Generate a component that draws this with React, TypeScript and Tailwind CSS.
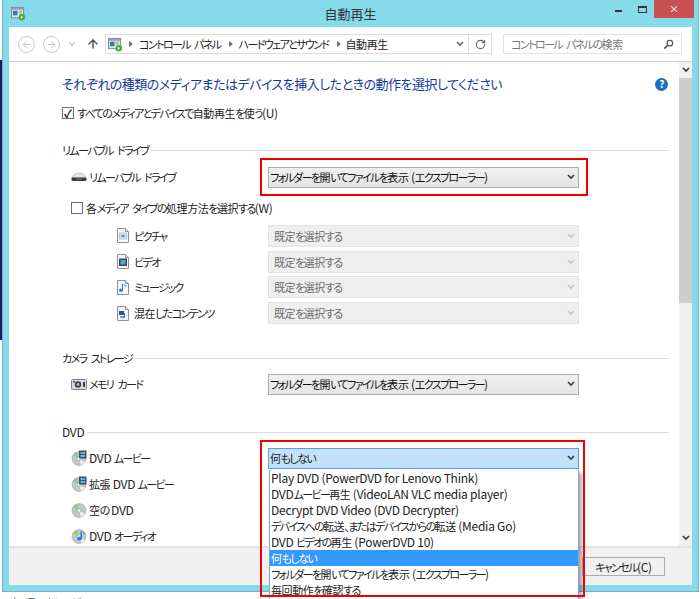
import { ArrowLeft, ArrowRight, ArrowUp, RotateCw, X } from "lucide-react";

const jp = "font-['Noto_Sans_CJK_JP',sans-serif] [font-feature-settings:'palt']";

// the reference font has very narrow kana, so each script gets its own size and tracking
function T({ s }: { s: string }) {
  const runs = s.split(/([\x20-\x7e]+|[\u3400-\u9fff]+)/).filter(Boolean);
  return (
    <>
      {runs.map((run, i) => {
        if (run === " ") {
          return <span key={i} className="whitespace-pre text-[12px] tracking-[1.5px]">{run}</span>;
        }
        if (/^[\x20-\x7e]/.test(run)) {
          return <span key={i} className="whitespace-pre text-[12px] tracking-[-0.25px]">{run}</span>;
        }
        if (/^[\u3400-\u9fff]/.test(run)) {
          return <span key={i} className="text-[11px] tracking-[-0.4px]">{run}</span>;
        }
        return <span key={i} className="text-[11px] tracking-[-1.6px]">{run}</span>;
      })}
    </>
  );
}

function AppIcon({ className }: { className?: string }) {
  return (
    <svg viewBox="0 0 16 16" width="15" height="15" className={className}>
      <rect x="0.5" y="1.5" width="13" height="11" fill="#e8eef2" stroke="#7a8288" />
      <rect x="1" y="2" width="12" height="2" fill="#8fa3b0" />
      <rect x="2" y="5" width="5" height="5" fill="#3d7a9a" />
      <rect x="8" y="5" width="4" height="1" fill="#8a9298" />
      <rect x="8" y="7" width="4" height="1" fill="#8a9298" />
      <circle cx="11.5" cy="12" r="3.5" fill="#3fae3a" />
      <path d="M10.5 10.5l2.5 1.5-2.5 1.5z" fill="#fff" />
    </svg>
  );
}

function Drive() {
  return (
    <svg viewBox="0 0 16 10" width="16" height="10">
      <path d="M1 6c1-3 3-5 7-5s6 2 7 5z" fill="#e4e4e4" stroke="#a8a8a8" strokeWidth="0.6" />
      <rect x="0.5" y="5.5" width="15" height="3.5" rx="1.2" fill="#3c3c3c" />
      <rect x="5" y="6.5" width="6" height="1" fill="#777" />
    </svg>
  );
}

function Doc({ kind }: { kind: "picture" | "video" | "music" | "mixed" }) {
  return (
    <svg viewBox="0 0 12 15" width="12" height="15">
      <path d="M0.5 0.5h8l3 3v11h-11z" fill="#f4f6f8" stroke="#8d9297" />
      <path d="M8.5 0.5v3h3" fill="#dfe3e6" stroke="#8d9297" />
      {kind === "picture" && (
        <>
          <rect x="2.5" y="5" width="7" height="6" fill="#cfe0ec" stroke="#9fb6c6" strokeWidth="0.6" />
          <rect x="4.5" y="7" width="3" height="2" fill="#4d8cc0" />
        </>
      )}
      {kind === "video" && (
        <>
          <rect x="2" y="4.5" width="8" height="7.5" fill="#2f4a66" />
          <rect x="3.5" y="6" width="5" height="4.5" fill="#5fa0cc" />
        </>
      )}
      {kind === "music" && <path d="M6 4v6.2a2 1.6 0 1 1-1-1.3V4h1l3 1.5v1.5z" fill="#2f80cf" />}
      {kind === "mixed" && (
        <>
          <rect x="2" y="5" width="5" height="4" fill="#31597e" />
          <path d="M8 7v4a1.5 1.2 0 1 1-1-1V7z" fill="#2f80cf" />
          <rect x="3" y="10" width="3" height="2" fill="#6aa6d0" />
        </>
      )}
    </svg>
  );
}

function Camera() {
  return (
    <svg viewBox="0 0 16 12" width="16" height="12">
      <rect x="0.5" y="1.5" width="15" height="10" rx="1" fill="#d4dae0" stroke="#7d858c" />
      <circle cx="7" cy="6.5" r="3.2" fill="#3a4048" />
      <circle cx="7" cy="6.5" r="1.4" fill="#a8bccb" />
      <rect x="12" y="4" width="2" height="5" fill="#3a4048" />
      <rect x="2" y="3" width="2" height="1.5" fill="#3a4048" />
    </svg>
  );
}

function Disc({ badge }: { badge?: "film" | "note" }) {
  return (
    <svg viewBox="0 0 16 16" width="16" height="16">
      <circle cx="8" cy="8.5" r="7" fill="#c2c6c8" stroke="#9da1a4" strokeWidth="0.6" />
      <path d="M8 8.5L2 5a7 7 0 0 1 4-3z" fill="#7fcf5f" opacity="0.7" />
      <path d="M8 8.5l6 3.5a7 7 0 0 1-4 3z" fill="#e9eced" />
      <circle cx="8" cy="8.5" r="1.8" fill="#fff" stroke="#8c9094" strokeWidth="0.6" />
      {badge === "film" && (
        <>
          <rect x="8" y="0.5" width="7.5" height="8" fill="#38536f" />
          <rect x="9.5" y="2" width="4.5" height="2" fill="#72aed6" />
          <rect x="9.5" y="5" width="4.5" height="2" fill="#72aed6" />
        </>
      )}
      {badge === "note" && <path d="M11 3v7.5a2.4 2 0 1 1-1.4-1.8V3l4 2v2z" fill="#2f80cf" />}
    </svg>
  );
}

function Chevron({ color = "#3a3a3a" }: { color?: string }) {
  return (
    <svg viewBox="0 0 8 6" width="8" height="6">
      <path d="M1 1l3 3 3-3" fill="none" stroke={color} strokeWidth="1.6" />
    </svg>
  );
}

function Crumb() {
  return (
    <svg viewBox="0 0 4 6" width="4" height="6" className="shrink-0">
      <path d="M0 0l4 3-4 3z" fill="#707070" />
    </svg>
  );
}

function Select({ label, disabled, open }: { label: string; disabled?: boolean; open?: boolean }) {
  const skin = open
    ? "h-[21px] border border-[#569de5] bg-[#c5e1f9] pl-[1px] text-[#222]"
    : disabled
      ? "h-[22px] border border-[#e2e4e3] bg-[#eeefee] pl-[5px] text-[#6d6d6d]"
      : "h-[21px] border border-[#acacac] bg-gradient-to-b from-[#f0f0f0] to-[#e5e5e5] pl-[1px] text-[#111]";
  return (
    <div className={`flex w-[311px] shrink-0 items-center justify-between pr-[3px] ${skin}`}>
      <span><T s={label} /></span>
      <Chevron color={disabled ? "#c4c4c4" : "#3a3a3a"} />
    </div>
  );
}

function GroupTitle({ children }: { children: string }) {
  return (
    <div className="flex items-center gap-[2px] pl-[62px] pr-[10px] text-[#222]">
      <span><T s={children} /></span>
      <div className="h-[1px] flex-1 bg-[#d9d9d9]" />
    </div>
  );
}

function Row({ icon, label, children }: { icon: React.ReactNode; label: string; children?: React.ReactNode }) {
  return (
    <div className="flex h-[26px] items-center pl-[71px] text-[#222]">
      <div className="flex w-[18px] shrink-0 items-center">{icon}</div>
      <span className="w-[179px] shrink-0"><T s={label} /></span>
      {children}
    </div>
  );
}

function SubRow({ icon, label }: { icon: React.ReactNode; label: string }) {
  return (
    <div className="flex h-[25.75px] items-center pl-[117px] text-[#222]">
      <div className="w-[17px] shrink-0">{icon}</div>
      <span className="w-[134px] shrink-0"><T s={label} /></span>
      <Select label="既定を選択する" disabled />
    </div>
  );
}

const menu = [
  "Play DVD (PowerDVD for Lenovo Think)",
  "DVDムービー再生 (VideoLAN VLC media player)",
  "Decrypt DVD Video (DVD Decrypter)",
  "デバイスへの転送、またはデバイスからの転送 (Media Go)",
  "DVD ビデオの再生 (PowerDVD 10)",
  "何もしない",
  "フォルダーを開いてファイルを表示 (エクスプローラー)",
  "毎回動作を確認する",
];

export default function App() {
  return (
    <div className={`relative h-[599px] w-[700px] overflow-hidden bg-white text-[12px] leading-[16px] ${jp}`}>
      {/* desktop sliver on the left */}
      <div className="absolute left-0 top-[60px] h-[280px] w-[2px] bg-[#1c1660]" />
      <div className="absolute left-[10px] top-[594px] text-[#555]"><T s="カメラ ストレージ" /></div>

      <div className="absolute left-[2px] top-0 flex h-[592px] w-[697px] flex-col border-x border-b border-[#6fb4c2] bg-[#86dbeb] px-[6px] pb-[6px]">
        <div className="relative flex h-[27px] shrink-0 items-center justify-center">
          <AppIcon className="absolute left-[2px] top-[6px]" />
          <span className="mt-[1px] text-[13px] text-[#333]">自動再生</span>
          <div className="absolute right-[70px] top-[10px] h-[2px] w-[7px] bg-[#333]" />
          <div className="absolute right-[45px] top-[6px] h-[7px] w-[9px] border border-t-2 border-[#333]" />
          <div className="absolute right-[-2px] top-0 flex h-[18px] w-[40px] items-center justify-center bg-[#c75050] text-white">
            <X size={10} strokeWidth={2.5} />
          </div>
        </div>

        <div className="flex min-h-0 flex-1 flex-col bg-white">
          <div className="flex h-[35px] shrink-0 items-center border-b border-[#bcd0dc]">
            <div className="ml-[9px] flex h-[17px] w-[17px] items-center justify-center rounded-full border border-[#c8c8c8] text-[#c0c0c0]">
              <ArrowLeft size={11} strokeWidth={2} />
            </div>
            <div className="ml-[8px] flex h-[17px] w-[17px] items-center justify-center rounded-full border border-[#c8c8c8] text-[#c0c0c0]">
              <ArrowRight size={11} strokeWidth={2} />
            </div>
            <div className="ml-[8px] flex"><Chevron color="#d0d0d0" /></div>
            <ArrowUp size={14} strokeWidth={2.5} className="ml-[10px] text-[#555]" />
            <div className="ml-[5px] flex h-[20px] w-[387px] items-center border border-[#dcdcdc] pl-[2px] text-[#222]">
              <AppIcon />
              <div className="ml-[6px]"><Crumb /></div>
              <span className="ml-[6px]"><T s="コントロール パネル" /></span>
              <div className="ml-[8px]"><Crumb /></div>
              <span className="ml-[6px]"><T s="ハードウェアとサウンド" /></span>
              <div className="ml-[8px]"><Crumb /></div>
              <span className="ml-[5px]"><T s="自動再生" /></span>
              <div className="ml-auto flex h-full items-center">
                <div className="mr-[4px] flex"><Chevron color="#666" /></div>
                <div className="flex h-full w-[23px] items-center justify-center border-l border-[#dcdcdc] text-[#666]">
                  <RotateCw size={11} strokeWidth={2.5} />
                </div>
              </div>
            </div>
            <div className="ml-[11px] flex h-[20px] w-[179px] items-center justify-between border border-[#e2e2e2] pl-[7px] pr-[7px] text-[#777]">
              <span><T s="コントロール パネルの検索" /></span>
              <svg viewBox="0 0 12 12" width="11" height="11">
                <circle cx="7.5" cy="4.5" r="3" fill="none" stroke="#555" strokeWidth="1.4" />
                <path d="M5.2 6.8L1.5 10.5" stroke="#555" strokeWidth="1.8" />
              </svg>
            </div>
          </div>

          <div className="relative flex min-h-0 flex-1">
            <div className="relative -ml-[9px] min-w-0 flex-1 overflow-hidden">
              <div className="flex items-center justify-between pl-[62px] pr-[11px] pt-[13px] text-[13px] leading-[18px] tracking-[-0.5px] text-[#0f3a9c]">
                <span>それぞれの種類のメディアまたはデバイスを挿入したときの動作を選択してください</span>
                <div className="flex h-[13px] w-[13px] items-center justify-center rounded-full bg-[#1c6fc0] text-[10px] font-bold leading-none text-white">?</div>
              </div>
              <label className="mt-[12px] flex items-center pl-[62px] text-[#222]">
                <span className="mr-[3px] flex h-[12px] w-[12px] items-center justify-center border border-[#707070] text-[11px] font-bold leading-none text-[#111]">✓</span>
                <span><T s="すべてのメディアとデバイスで自動再生を使う(U)" /></span>
              </label>

              <div className="mt-[21px]"><GroupTitle>リムーバブル ドライブ</GroupTitle></div>
              <div className="mt-[6px]"><Row icon={<Drive />} label="リムーバブル ドライブ"><Select label="フォルダーを開いてファイルを表示 (エクスプローラー)" /></Row></div>
              <div className="mt-[10px] flex items-center pl-[71px] text-[#222]">
                <span className="mr-[3px] h-[12px] w-[12px] border border-[#707070]" />
                <span><T s="各メディア タイプの処理方法を選択する(W)" /></span>
              </div>
              <div className="mt-[7px]">
                <SubRow icon={<Doc kind="picture" />} label="ピクチャ" />
                <SubRow icon={<Doc kind="video" />} label="ビデオ" />
                <SubRow icon={<Doc kind="music" />} label="ミュージック" />
                <SubRow icon={<Doc kind="mixed" />} label="混在したコンテンツ" />
              </div>

              <div className="mt-[24px]"><GroupTitle>カメラ ストレージ</GroupTitle></div>
              <div className="mt-[5px]"><Row icon={<Camera />} label="メモリ カード"><Select label="フォルダーを開いてファイルを表示 (エクスプローラー)" /></Row></div>

              <div className="mt-[27px]"><GroupTitle>DVD</GroupTitle></div>
              <div className="mt-[5px]">
                <Row icon={<Disc badge="film" />} label="DVD ムービー"><Select label="何もしない" open /></Row>
                <Row icon={<Disc badge="film" />} label="拡張 DVD ムービー" />
                <Row icon={<Disc />} label="空の DVD" />
                <Row icon={<Disc badge="note" />} label="DVD オーディオ" />
              </div>
            </div>

            <div className="flex w-[13px] shrink-0 flex-col bg-[#f0f0f0]">
              <div className="flex h-[16px] items-center justify-center"><Chevron /></div>
              <div className="h-[225px] bg-[#cdcdcd]" />
              <div className="mt-auto flex h-[16px] items-center justify-center"><Chevron /></div>
            </div>
          </div>

          <div className="flex h-[39px] shrink-0 items-center justify-end border-t-2 border-[#e4e4e4] bg-[#f0f0f0] pr-[27px]">
            <div className="flex h-[19px] w-[83px] items-center justify-center border border-[#acacac] bg-[#f0f0f0] text-[#222]">
              <T s="キャンセル(C)" />
            </div>
          </div>
        </div>
      </div>

      {/* open dropdown and the red call-outs lie over the window */}
      <div className="absolute left-[269px] top-[470px] h-[129px] w-[310px] overflow-hidden border-x border-[#7ba7d0] bg-white text-[#222] shadow-[3px_3px_3px_rgba(0,0,0,0.3)]">
        {menu.map((item, i) => (
          <div key={item} className={i === 5 ? "h-[16px] bg-[#3399ff] pl-[1px] text-white" : "h-[16px] pl-[1px]"}>
            <T s={item} />
          </div>
        ))}
      </div>
      <div className="absolute left-[260px] top-[158px] h-[38px] w-[328px] border-2 border-[#f00000]" />
      <div className="absolute left-[260px] top-[440px] h-[157px] w-[325px] border-2 border-[#f00000]" />
    </div>
  );
}
